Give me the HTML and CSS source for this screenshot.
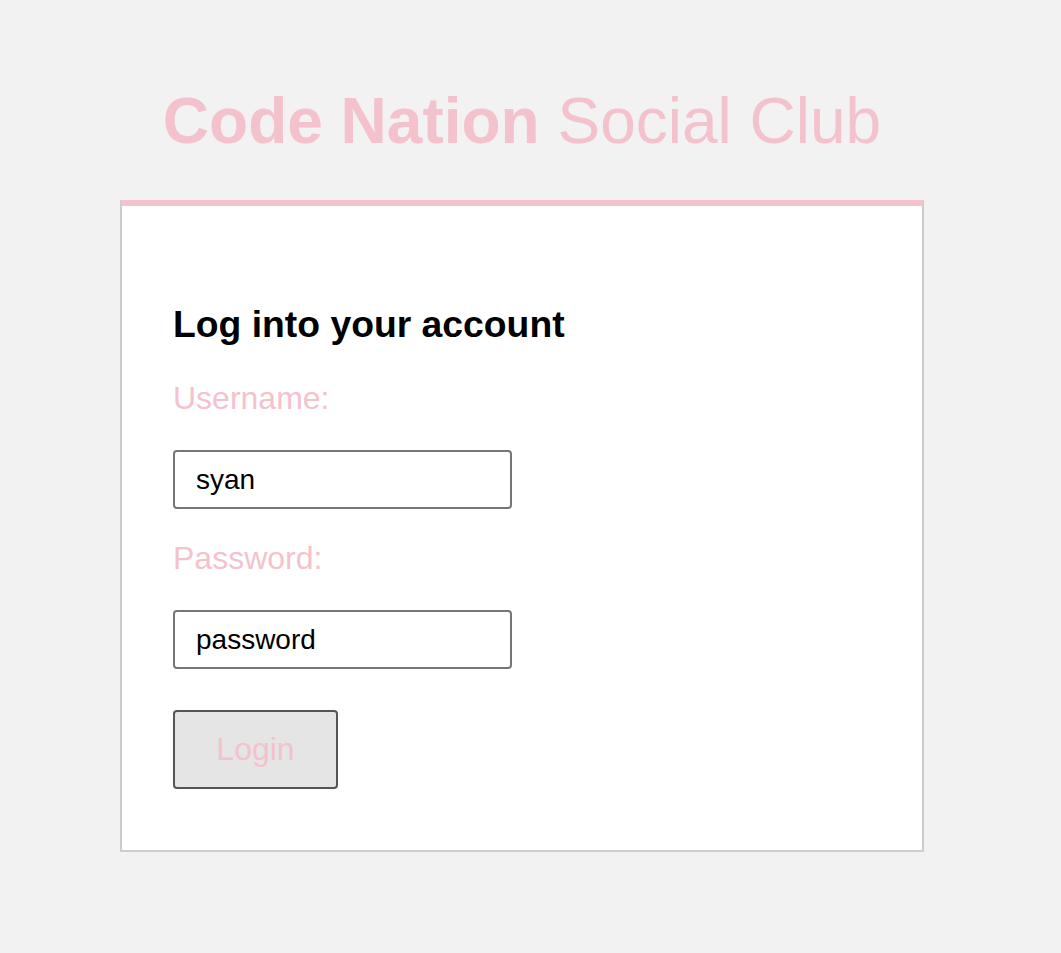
FILE: index.html
```html
<!DOCTYPE html>
<html lang="en">
<head>
<meta charset="utf-8">
<title>Code Nation Social Club</title>
<link rel="stylesheet" href="styles.css">
</head>
<body>
<div class="page">
  <h1 class="brand"><b>Code Nation</b> Social Club</h1>
  <div class="card">
    <form class="form">
      <h2 class="heading">Log into your account</h2>
      <label class="label" for="user">Username:</label>
      <input class="field" id="user" type="text" value="syan">
      <label class="label" for="pass">Password:</label>
      <input class="field" id="pass" type="text" value="password">
      <button class="btn" type="button">Login</button>
    </form>
  </div>
</div>
</body>
</html>
```

FILE: styles.css
```css
html, body {
  margin: 0;
  padding: 0;
  background: #f2f2f2;
  font-family: "Liberation Sans", Arial, Helvetica, sans-serif;
}
.page {
  width: 804px;
  margin-left: 120px;
  padding-top: 84px;
}
.brand {
  margin: 0;
  font-size: 64px;
  line-height: 74px;
  font-weight: 400;
  color: #f4c2cc;
  text-align: center;
}
.brand b {
  font-weight: 700;
}
.card {
  margin-top: 42px;
  background: #fff;
  border: 2px solid #cccccc;
  border-top: 6px solid #f4c2cc;
  padding: 98px 51px 61px;
}
.form {
  display: flex;
  flex-direction: column;
  align-items: flex-start;
}
.heading {
  margin: 0;
  font-size: 37.3px;
  line-height: 41px;
  font-weight: 700;
  color: #000;
}
.label {
  margin-top: 35px;
  font-size: 32px;
  line-height: 37px;
  color: #f4c2cc;
}
.field {
  box-sizing: border-box;
  margin-top: 33px;
  width: 339px;
  height: 59px;
  border: 2px solid #767676;
  border-radius: 4px;
  padding: 0 21px;
  font-family: "Liberation Sans", Arial, Helvetica, sans-serif;
  font-size: 28px;
  color: #000;
  background: #fff;
  outline: none;
}
.field + .label {
  margin-top: 31px;
}
.btn {
  box-sizing: border-box;
  margin-top: 41px;
  width: 165px;
  height: 79px;
  border: 2px solid #555555;
  border-radius: 4px;
  background: #e5e5e5;
  color: #f4c2cc;
  font-family: "Liberation Sans", Arial, Helvetica, sans-serif;
  font-size: 32px;
  padding: 0;
}
```
